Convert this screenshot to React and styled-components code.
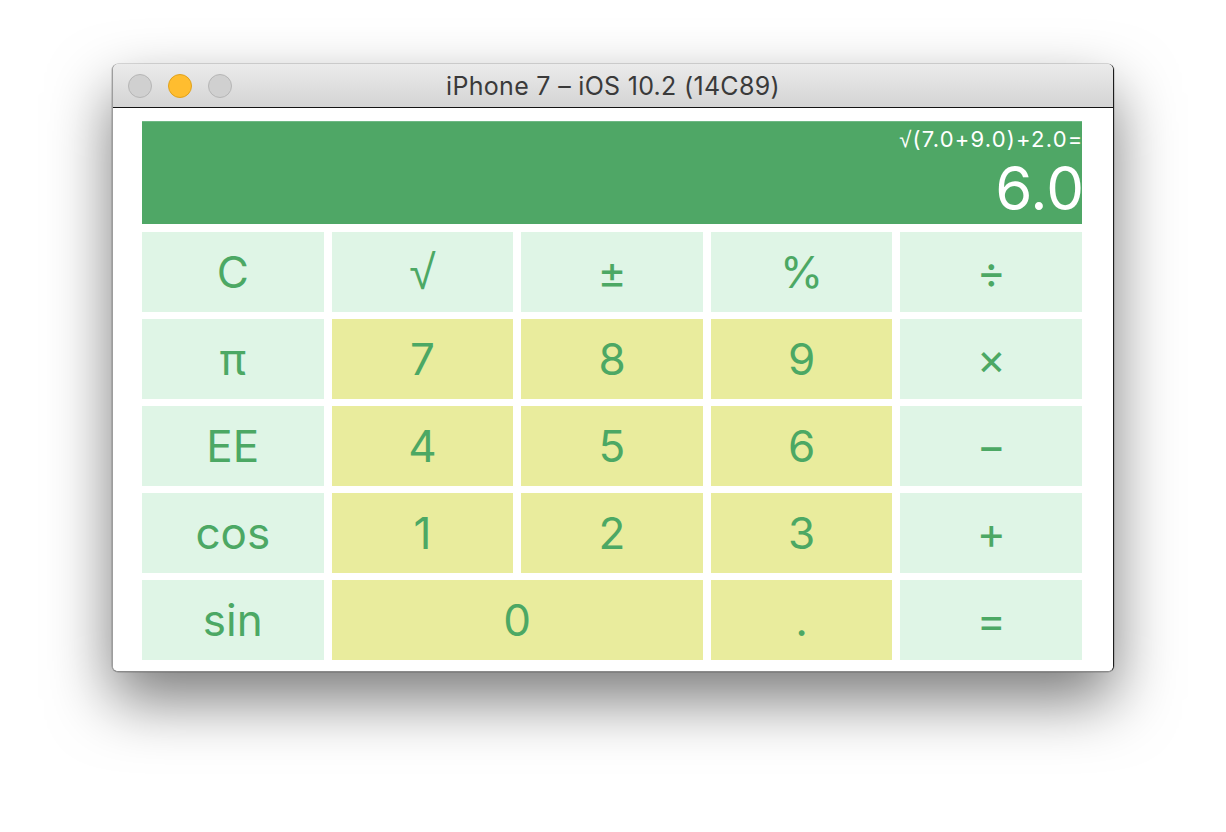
import React from "react";
import styled, { createGlobalStyle } from "styled-components";

const GlobalStyle = createGlobalStyle`
  html, body { margin: 0; padding: 0; background: #ffffff; }
  body { font-family: "Inter", "Roboto", sans-serif; }
`;

const Page = styled.div`
  width: 1226px;
  height: 832px;
  box-sizing: border-box;
  padding: 64px 0 0 112px;
  overflow: hidden;
`;

const Window = styled.div`
  width: 1002px;
  box-sizing: border-box;
  border-radius: 6px;
  overflow: hidden;
  border-left: 1px solid #9d9d9d;
  border-right: 1px solid #1c1c1c;
  border-bottom: 1px solid #8a8a8a;
  box-shadow: 0 28px 62px rgba(0, 0, 0, 0.52), 0 0 0 0.5px rgba(0, 0, 0, 0.25);
  background: #ffffff;
`;

const TitleBar = styled.div`
  height: 43px;
  display: grid;
  grid-template-columns: 1fr auto 1fr;
  align-items: center;
  background: linear-gradient(#ebebeb, #d4d4d4);
  border-bottom: 1px solid #141414;
  padding: 0 15px;
`;

const Lights = styled.div`
  display: flex;
  gap: 16px;
`;

const Light = styled.span`
  width: 22px;
  height: 22px;
  border-radius: 50%;
  background: ${(p) => (p.$active ? "#ffbd2f" : "#d0d0d0")};
  border: 1px solid ${(p) => (p.$active ? "#e0a21c" : "#b6b6b6")};
`;

const Title = styled.div`
  font-family: "Inter", "Roboto", sans-serif;
  font-size: 25px;
  line-height: 1;
  padding-top: 1px;
  color: #3a3a3a;
  letter-spacing: 0.3px;
  white-space: nowrap;
`;

const Content = styled.div`
  padding: 13px 31px 11px 29px;
  background: #ffffff;
`;

const Display = styled.div`
  height: 103px;
  box-sizing: border-box;
  background: #4fa766;
  border-top: 1px solid #6fb885;
  display: flex;
  flex-direction: column;
  align-items: flex-end;
  color: #ffffff;
  padding-top: 6px;
`;

const Expression = styled.div`
  font-size: 22px;
  line-height: 1;
  letter-spacing: 1.2px;
  margin-right: -1.5px;
  white-space: nowrap;
`;

const Root = styled.span`
  font-family: "Liberation Sans", "Inter", sans-serif;
  font-weight: 400;
`;

const Result = styled.div`
  font-size: 60px;
  line-height: 1;
  margin-top: 7px;
  margin-right: -2px;
`;

const Keypad = styled.div`
  margin-top: 8px;
  display: grid;
  grid-template-columns: repeat(5, 1fr);
  grid-auto-rows: 80px;
  gap: 7px 8px;
`;

const Key = styled.button`
  grid-column: span ${(p) => p.$span || 1};
  border: none;
  margin: 0;
  padding: 0;
  display: flex;
  align-items: center;
  justify-content: center;
  background: ${(p) => (p.$digit ? "#e9ec9d" : "#dff5e6")};
  color: #4ca864;
  font-family: ${(p) =>
    p.$alt ? '"Liberation Sans", "Inter", sans-serif' : '"Inter", "Roboto", sans-serif'};
  font-size: ${(p) => (p.$alt ? "48px" : "44px")};
  font-weight: 400;
  cursor: pointer;
`;

const keys = [
  ["C"], ["√", false, 1, true], ["±"], ["%"], ["÷"],
  ["π"], ["7", true], ["8", true], ["9", true], ["×"],
  ["EE"], ["4", true], ["5", true], ["6", true], ["−"],
  ["cos"], ["1", true], ["2", true], ["3", true], ["+"],
  ["sin"], ["0", true, 2], [".", true], ["="],
];

export default function App() {
  return (
    <>
      <GlobalStyle />
      <Page>
        <Window>
          <TitleBar>
            <Lights>
              <Light />
              <Light $active />
              <Light />
            </Lights>
            <Title>iPhone 7 – iOS 10.2 (14C89)</Title>
            <span />
          </TitleBar>
          <Content>
            <Display>
              <Expression>
                <Root>√</Root>(7.0+9.0)+2.0=
              </Expression>
              <Result>6.0</Result>
            </Display>
            <Keypad>
              {keys.map(([label, digit, span, alt], i) => (
                <Key key={i} $digit={digit} $span={span} $alt={alt}>
                  {label}
                </Key>
              ))}
            </Keypad>
          </Content>
        </Window>
      </Page>
    </>
  );
}
